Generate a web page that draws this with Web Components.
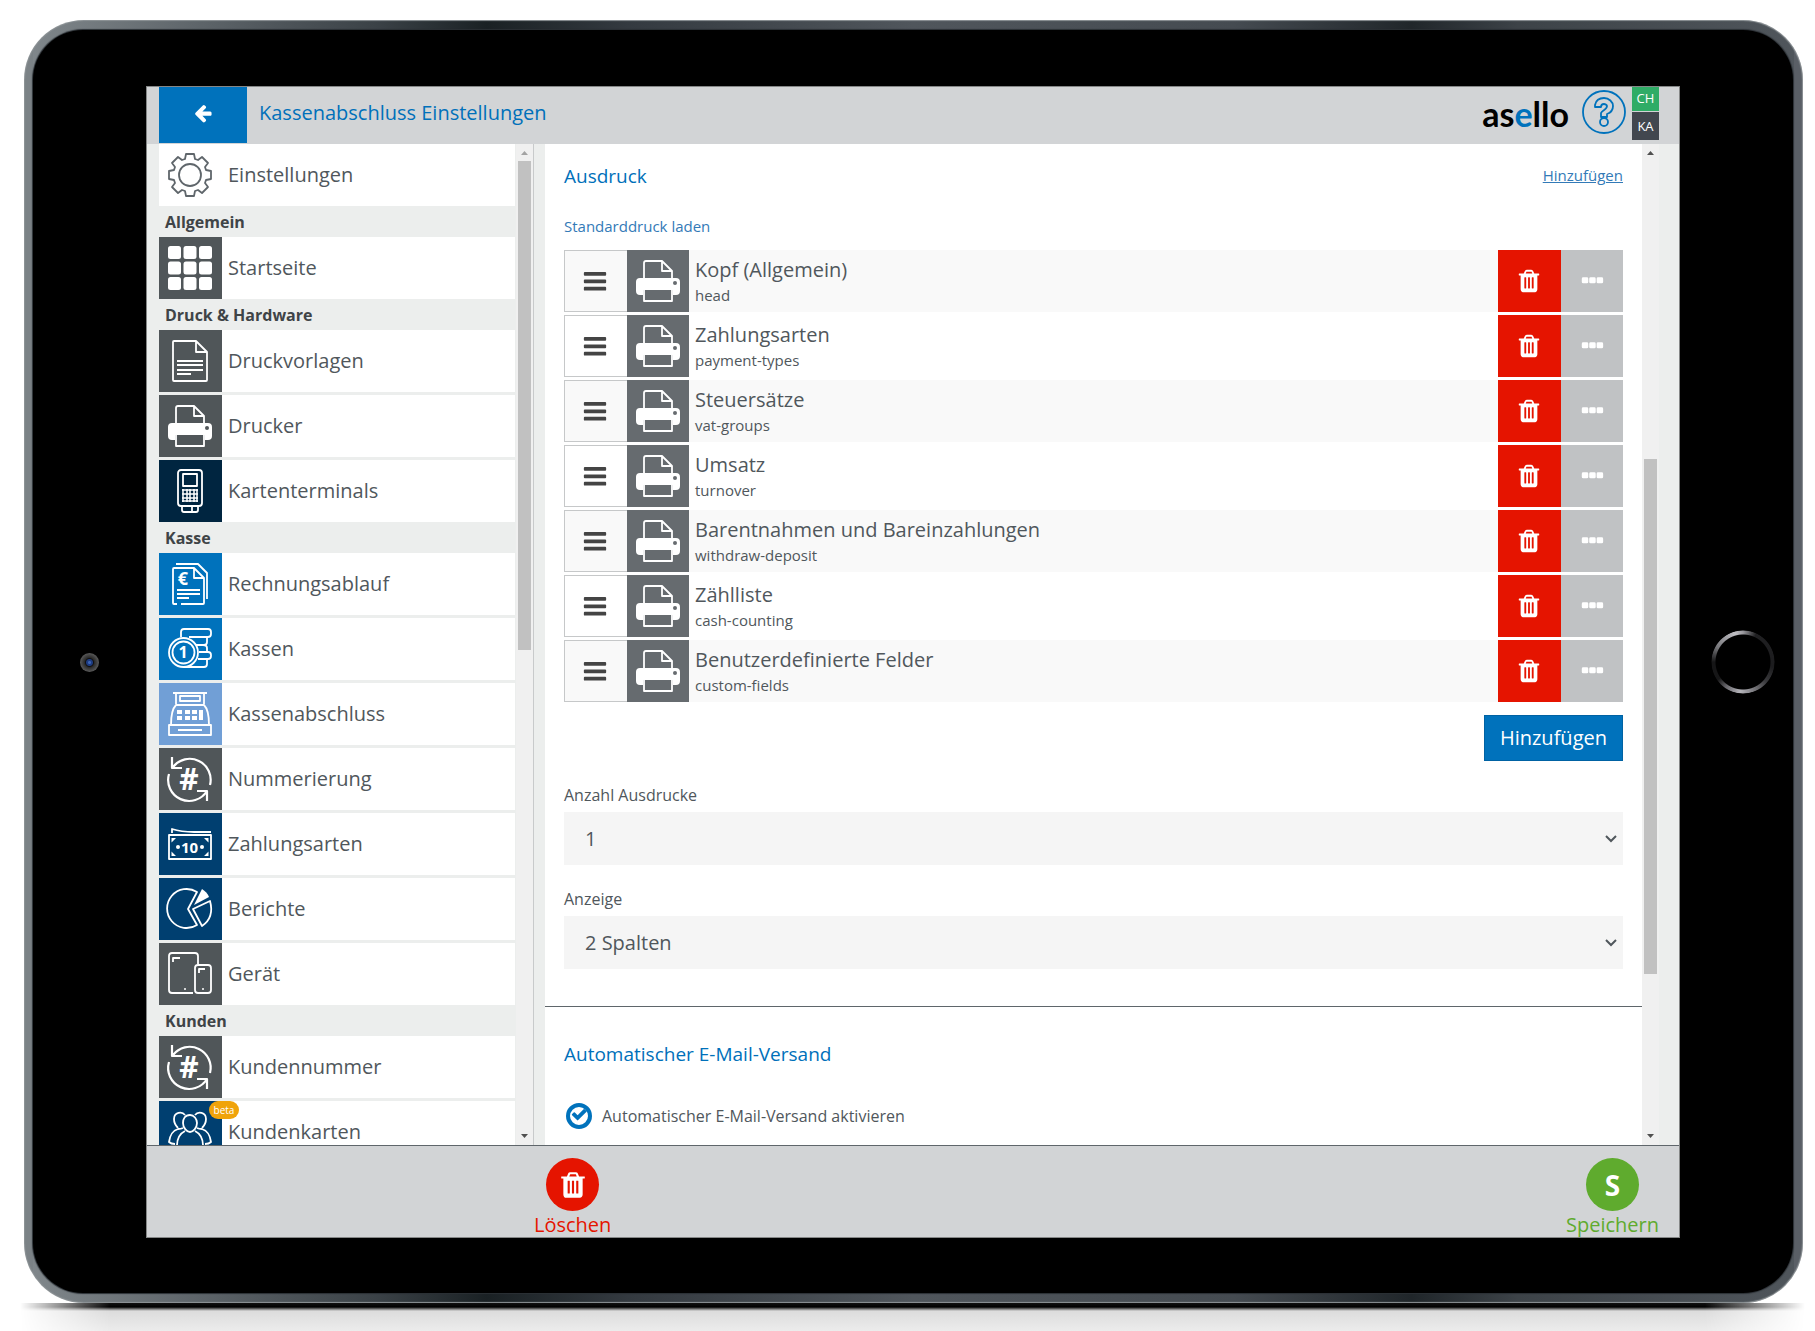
<!DOCTYPE html>
<html lang="de">
<head>
  <meta charset="utf-8">
  <title>Kassenabschluss Einstellungen</title>
  <style>
    body {
      background-color: hsl(0, 0%, 100%);
      color: #50575c;
      font-family: "Open Sans", "Liberation Sans", sans-serif;
      font-size: 20px;
      margin: 0;
    }
  </style>
</head>
<body>
  <tablet-frame>
    <settings-page></settings-page>
  </tablet-frame>

  <script>
    const printer = /* html */ `
      <path d="M8 19V4Q8 2 10 2H26L36 12V19M26 2V12H36" />
      <path class="solid" d="M4 19H40Q44 19 44 23V32Q44 36 40 36H37V31H7V36H4Q0 36 0 32V23Q0 19 4 19Z" />
      <circle class="hole" cx="39" cy="24" r="2" />
      <path d="M8 30H36V42H8Z" />`

    const renumber = /* html */ `
      <path class="bold" d="M5 10A21 21 0 0 1 42 28M1 17A21 21 0 0 0 39 34M4 0V11H14M29 34H39V44" />
      <text x="21" y="33" font-size="30">#</text>`

    const icons = {
      gear: /* html */ `
        <circle cx="22" cy="22" r="11" />
        <path d="M17 6L18 1H26L27 6L30 7L34 4L40 10L37 14L38 17L43 18V26L38 27L37 30L40 34L34 40L30 37L27 38L26 43H18L17 38L14 37L10 40L4 34L7 30L6 27L1 26V18L6 17L7 14L4 10L10 4L14 7Z" />`,
      grid: [0, 15.5, 31].map(y => [0, 15.5, 31].map(x =>
        `<rect class="solid" x="${x}" y="${y}" width="13" height="13" rx="2.5" />`).join('')).join(''),
      document: /* html */ `
        <path d="M28 2H6Q5 2 5 3V41Q5 42 6 42H38Q39 42 39 41V13ZM28 2V13H39" />
        <path d="M9 22H35M9 26H35M9 31H35M9 35H23" />`,
      printer,
      terminal: /* html */ `
        <rect x="10" y="1" width="24" height="36" rx="3" />
        <rect x="15" y="5" width="14" height="12" />
        <path d="M14 37V41Q14 43 16 43H28Q30 43 30 41V37M24 37V43" />
        <path class="thin" d="M14 21H30M14 25H30M14 29H30M14 32H30M15 20V33M19 20V33M22 20V33M26 20V33M29 20V33" />`,
      invoice: /* html */ `
        <path d="M9 42H6Q5 42 5 41V7Q5 6 6 6H26L36 16V41Q36 42 35 42H13M26 6V16H36M8 2H30L39 11V37" />
        <path d="M9 28H32M9 32H32M9 36H21" />
        <text x="15" y="23" font-size="18">€</text>`,
      coins: /* html */ `
        <circle cx="15.5" cy="25.5" r="14.5" /><circle cx="15.5" cy="25.5" r="11" />
        <path d="M13 10V5Q13 2 16 2H40Q43 2 43 5V7Q43 10 40 10H21M39 10V15Q39 18 36 18H28M35 18Q39 18 39 21V25H31M38 25H40Q43 25 43 28V29Q43 32 40 32H30M39 32V37Q39 40 36 40H16M30 32H36" />
        <text x="15" y="31" font-size="16">1</text>`,
      register: /* html */ `
        <path d="M5 1H39M8 1V12M36 1V12M12 4H32V9H12ZM1 33H43V43H1ZM10 38H34M3 33C3 24 4 17 8 13H36C40 17 41 24 41 33" />
        <path class="keys" d="M9 20H14M17 20H22M24 20H29M9 26H14M17 26H22M24 26H29M33 18V28" />`,
      renumber,
      banknote: /* html */ `
        <path d="M1 13H43V37H1ZM4 11V7C10 9 18 10 26 10H43" />
        <path class="solid" d="M3.5 16H8L3.5 20.5ZM40.5 16V20.5L36 16ZM3.5 34V29.5L8 34ZM40.5 34H36L40.5 29.5Z" />
        <circle class="solid" cx="10" cy="25" r="2" /><circle class="solid" cx="34" cy="25" r="2" />
        <text x="21.5" y="31" font-size="15">10</text>`,
      pie: /* html */ `
        <path d="M29 5A19.5 19.5 0 1 0 29 38L20 22ZM25 22L42 14C45 25 43 33 34 39Z" />
        <path class="solid" d="M26 18L34 2Q39 5 41 10Z" />`,
      devices: /* html */ `
        <path d="M30 12V4Q30 1 27 1H4Q1 1 1 4V38Q1 41 4 41H25" />
        <rect x="27" y="13" width="16" height="28" rx="3" />
        <path d="M5 10V6H12M31 21V17H37" />
        <circle class="solid" cx="17" cy="37" r="1" /><circle class="solid" cx="35" cy="37" r="1" />`,
      people: /* html */ `
        <path d="M22 5C17 5 15 9 15 13C15 18 19 22 22 22C25 22 29 18 29 13C29 9 26 5 22 5Z" />
        <path d="M17 5C14 1 6 2 6 9C6 13 8 16 10 18M27 5C30 1 38 2 38 9C38 13 36 16 34 18" />
        <path d="M10 19C4 21 2 25 1 32Q3 34 7 34M34 19C40 21 42 25 43 32Q41 34 37 34" />
        <path d="M17 21C11 24 9 29 9 36M27 21C33 24 35 29 35 36M15 18C13 19 11 19 10 19M29 18C31 19 33 19 34 19" />`,
      help: /* html */ `
        <circle cx="22" cy="22" r="21" />
        <path d="M13 15C14 10 17 8 22 8C27 8 31 12 31 16C31 21 28 23 25 24V27H19V23C20 20 25 20 25 16C25 15 23 14 22 14C20 14 19 15 19 17H13Z" />
        <circle cx="22" cy="32" r="4" />`
    }

    const glyphs = {
      trash: 'M704 1376v-704q0-14-9-23t-23-9h-64q-14 0-23 9t-9 23v704q0 14 9 23t23 9h64q14 0 23-9t9-23zm256 0v-704q0-14-9-23t-23-9h-64q-14 0-23 9t-9 23v704q0 14 9 23t23 9h64q14 0 23-9t9-23zm256 0v-704q0-14-9-23t-23-9h-64q-14 0-23 9t-9 23v704q0 14 9 23t23 9h64q14 0 23-9t9-23zm-544-992h448l-48-117q-7-9-17-11h-317q-10 2-17 11zm928 32v64q0 14-9 23t-23 9h-96v948q0 83-47 143.5t-113 60.5h-832q-66 0-113-58.5t-47-141.5v-952h-96q-14 0-23-9t-9-23v-64q0-14 9-23t23-9h309l70-167q15-37 54-63t79-26h320q40 0 79 26t54 63l70 167h309q14 0 23 9t9 23z',
      back: 'M1664 896v128q0 53-32.5 90.5t-84.5 37.5h-704l293 294q38 36 38 90t-38 90l-75 76q-37 37-90 37-52 0-91-37l-651-652q-37-37-37-90 0-52 37-91l651-650q38-38 91-38 52 0 90 38l75 74q38 38 38 91t-38 91l-293 293h704q52 0 84.5 37.5t32.5 90.5z',
      bars: 'M128 340q0-64 64-64h1408q64 0 64 64v128q0 64-64 64h-1408q-64 0-64-64zM128 852q0-64 64-64h1408q64 0 64 64v128q0 64-64 64h-1408q-64 0-64-64zM128 1364q0-64 64-64h1408q64 0 64 64v128q0 64-64 64h-1408q-64 0-64-64z',
      more: 'M192 736q0-96 96-96h256q96 0 96 96v224q0 96-96 96h-256q-96 0-96-96zM704 736q0-96 96-96h256q96 0 96 96v224q0 96-96 96h-256q-96 0-96-96zM1216 736q0-96 96-96h256q96 0 96 96v224q0 96-96 96h-256q-96 0-96-96z',
      check: 'M1400 620l-560 560q-40 40-80 0l-340-340q-40-40 0-80l110-110q40-40 80 0l190 190 410-410q40-40 80 0l110 110q40 40 0 80z'
    }

    class LineIcon extends HTMLElement {
      constructor () {
        super()
        this.shadow = this.attachShadow({ mode: 'open' })
      }

      connectedCallback () {
        this.shadow.innerHTML =
          /* html */ `
            <style>
              :host{
                display: block;
                height: 44px;
                width: 44px;
              }

              svg{
                display: block;
                fill: none;
                height: 100%;
                overflow: visible;
                stroke: currentColor;
                stroke-linejoin: round;
                stroke-width: 1.8;
                width: 100%;
              }

              .solid{
                fill: currentColor;
                stroke: none;
              }

              .hole{
                fill: var(--tile, #505659);
                stroke: none;
              }

              .thin{
                stroke-width: 1.5;
              }

              .bold{
                stroke-width: 2.2;
              }

              .keys{
                stroke-width: 4;
              }

              text{
                fill: currentColor;
                font-family: "Open Sans", sans-serif;
                font-weight: 700;
                stroke: none;
                text-anchor: middle;
              }
            </style>
            <svg viewBox="0 0 44 44" aria-hidden="true">${icons[this.getAttribute('name')]}</svg>
          `
      }
    }

    customElements.define('line-icon', LineIcon)

    class GlyphIcon extends HTMLElement {
      constructor () {
        super()
        this.shadow = this.attachShadow({ mode: 'open' })
      }

      connectedCallback () {
        this.shadow.innerHTML =
          /* html */ `
            <style>
              :host{
                display: block;
                height: 26px;
                width: 26px;
              }

              svg{
                display: block;
                fill: currentColor;
                height: 100%;
                width: 100%;
              }
            </style>
            <svg viewBox="0 0 1792 1792" aria-hidden="true"><path d="${glyphs[this.getAttribute('name')]}" /></svg>
          `
      }
    }

    customElements.define('glyph-icon', GlyphIcon)

    class TabletFrame extends HTMLElement {
      constructor () {
        super()
        this.shadow = this.attachShadow({ mode: 'open' })
        this.shadow.innerHTML =
          /* html */ `
            <style>
              :host{
                box-sizing: border-box;
                display: flex;
                flex-direction: column;
                height: 100vh;
                padding-top: 20px;
              }

              .case{
                background:
                  linear-gradient(90deg, #7b8286 0, #7b8286 9px, transparent 9px, transparent calc(100% - 9px), #5a5f66 calc(100% - 9px)),
                  linear-gradient(90deg, #81888c 0, #5d6469 10%, #3a4146 20%, #1a2124 26%, #343a40 34%, #50565c 50%, #454b51 68%, #20262a 78%, #3d4348 84%, #50565c 100%);
                border-radius: 60px;
                box-shadow: inset 0 0 1px 1px #8e9497;
                box-sizing: border-box;
                display: flex;
                flex: 1;
                margin: 0 12px 0 24px;
                min-height: 0;
                padding: 10px 10px 10px 9px;
              }

              .glass{
                background-color: #000;
                border-radius: 50px;
                box-shadow: 0 0 1px 1px #2b3035;
                display: grid;
                flex: 1;
                grid-template-columns: 113px 1fr 113px;
                grid-template-rows: minmax(0, 1fr);
                padding: 56px 0 55px;
              }

              .screen{
                border: 1px solid #858787;
                display: flex;
                min-width: 0;
                overflow: hidden;
              }

              .camera, .home{
                align-self: center;
                border-radius: 50%;
                justify-self: center;
              }

              .camera{
                background: radial-gradient(circle, #3c64b4 0 1px, #1c3a80 2px 3px, #111 4px, #2c2c2c 5px, #555 9px);
                height: 19px;
                width: 19px;
              }

              .home{
                background: conic-gradient(#9a999e 0deg, #202022 25deg, #1c1c1e 100deg, #39393c 130deg, #b5b4ba 185deg, #66656a 215deg, #161617 235deg, #161617 270deg, #77777b 300deg, #c0bfc4 345deg, #9a999e 360deg);
                height: 64px;
                margin-left: 13px;
                mask: radial-gradient(circle, transparent 27px, #000 28px 31px, transparent 32px);
                width: 64px;
              }

              .ground{
                background: linear-gradient(#111 0, #000 4px, #777 6px, #dcdcdc 8px, #ececec 100%);
                flex: none;
                height: 28px;
                mask: linear-gradient(90deg, transparent 20px, #000 110px, #000 calc(100% - 110px), transparent calc(100% - 10px));
              }
            </style>

            <div class="case">
              <div class="glass">
                <span class="camera"></span>
                <div class="screen"><slot></slot></div>
                <span class="home"></span>
              </div>
            </div>
            <div class="ground"></div>
          `
      }
    }

    customElements.define('tablet-frame', TabletFrame)

    class ScrollBar extends HTMLElement {
      constructor () {
        super()
        this.shadow = this.attachShadow({ mode: 'open' })
      }

      // before / size / after are shares of the free track
      connectedCallback () {
        const [before, size, after] = this.getAttribute('parts').split(' ')
        this.shadow.innerHTML =
          /* html */ `
            <style>
              :host{
                align-items: center;
                background-color: #f0f0f0;
                display: flex;
                flex: none;
                flex-direction: column;
                width: 17px;
              }

              svg{
                fill: #505050;
                flex: none;
                height: 17px;
                width: 17px;
              }

              :host([at-top]) .up{
                fill: #a3a3a3;
              }

              .thumb{
                background-color: #c1c1c1;
                width: 13px;
              }
            </style>
            <svg class="up" viewBox="0 0 17 17"><path d="M5 11L8.5 7L12 11Z" /></svg>
            <span style="flex: ${before}"></span>
            <span class="thumb" style="flex: ${size}"></span>
            <span style="flex: ${after}"></span>
            <svg viewBox="0 0 17 17"><path d="M5 6L8.5 10L12 6Z" /></svg>
          `
      }
    }

    customElements.define('scroll-bar', ScrollBar)

    class PageHeader extends HTMLElement {
      constructor () {
        super()
        this.shadow = this.attachShadow({ mode: 'open' })
        this.shadow.innerHTML =
          /* html */ `
            <style>
              :host{
                align-items: flex-start;
                background-color: #d2d4d6;
                display: flex;
                flex: none;
                height: 57px;
                padding: 0 20px 0 12px;
              }

              button{
                background: none;
                border: 0;
                color: #0072bc;
                padding: 0;
              }

              .back{
                background-color: #0072bc;
                color: #fff;
                display: grid;
                height: 56px;
                padding-bottom: 4px;
                place-content: center;
                width: 88px;
              }

              .back glyph-icon{
                height: 20px;
                width: 20px;
              }

              h1{
                color: #0070ba;
                flex: 1;
                font-size: 20px;
                font-weight: 400;
                line-height: 52px;
                margin: 0 0 0 12px;
              }

              .logo{
                color: #000;
                font-family: Lato, sans-serif;
                font-size: 34px;
                font-weight: 700;
                line-height: 54px;
                margin-right: 13px;
              }

              .logo span{
                color: #0072bc;
              }

              .help{
                margin: 3px 6px 0 0;
              }

              .badges{
                color: #fff;
                display: grid;
                font-size: 13px;
                gap: 1px;
                grid-template-rows: 24px 28px;
                text-align: center;
                width: 27px;
              }

              .branch{
                background-color: #2fac66;
                line-height: 22px;
              }

              .user{
                background-color: #42474f;
                line-height: 29px;
              }
            </style>

            <button class="back" aria-label="Zurück"><glyph-icon name="back"></glyph-icon></button>
            <h1><slot></slot></h1>
            <div class="logo">as<span>e</span>llo</div>
            <button class="help" aria-label="Hilfe"><line-icon name="help"></line-icon></button>
            <div class="badges">
              <span class="branch">CH</span>
              <span class="user">KA</span>
            </div>
          `
      }
    }

    customElements.define('page-header', PageHeader)

    class NavItem extends HTMLElement {
      constructor () {
        super()
        this.shadow = this.attachShadow({ mode: 'open' })
      }

      connectedCallback () {
        const badge = this.getAttribute('badge')
        this.shadow.innerHTML =
          /* html */ `
            <style>
              :host{
                background-color: #fff;
                display: block;
                position: relative;
              }

              a{
                align-items: center;
                color: inherit;
                display: flex;
                height: 62px;
                text-decoration: none;
              }

              .tile{
                --tile: ${this.getAttribute('tile') || '#fff'};
                background-color: var(--tile);
                box-sizing: border-box;
                color: ${this.hasAttribute('tile') ? '#fff' : '#5f666b'};
                height: 62px;
                padding: 9px;
                width: 63px;
              }

              .label{
                padding: 0 0 2px 6px;
              }

              .badge{
                background-color: #f0a30a;
                border-radius: 9px;
                color: #fff;
                font-size: 10px;
                left: 50px;
                line-height: 18px;
                position: absolute;
                text-align: center;
                top: 0;
                width: 30px;
              }
            </style>

            <a href="#">
              <span class="tile"><line-icon name="${this.getAttribute('icon')}"></line-icon></span>
              <span class="label"><slot></slot></span>
            </a>
            ${badge ? `<span class="badge">${badge}</span>` : ''}
          `
      }
    }

    customElements.define('nav-item', NavItem)

    class SideNav extends HTMLElement {
      constructor () {
        super()
        this.shadow = this.attachShadow({ mode: 'open' })
        this.data = []
      }

      connectedCallback () {
        this.loadData()
        this.render()
      }

      loadData () {
        const grey = '#505659'
        const blue = '#0072bc'
        const navy = '#003f70'

        this.data = [
          {
            title: 'Allgemein',
            items: [
              { label: 'Startseite', icon: 'grid', tile: grey }
            ]
          },
          {
            title: 'Druck &amp; Hardware',
            items: [
              { label: 'Druckvorlagen', icon: 'document', tile: grey },
              { label: 'Drucker', icon: 'printer', tile: grey },
              { label: 'Kartenterminals', icon: 'terminal', tile: '#002540' }
            ]
          },
          {
            title: 'Kasse',
            items: [
              { label: 'Rechnungsablauf', icon: 'invoice', tile: blue },
              { label: 'Kassen', icon: 'coins', tile: blue },
              { label: 'Kassenabschluss', icon: 'register', tile: '#719fd6' },
              { label: 'Nummerierung', icon: 'renumber', tile: grey },
              { label: 'Zahlungsarten', icon: 'banknote', tile: navy },
              { label: 'Berichte', icon: 'pie', tile: navy },
              { label: 'Gerät', icon: 'devices', tile: grey }
            ]
          },
          {
            title: 'Kunden',
            items: [
              { label: 'Kundennummer', icon: 'renumber', tile: grey },
              { label: 'Kundenkarten', icon: 'people', tile: navy, badge: 'beta' }
            ]
          }
        ]
      }

      render () {
        this.shadow.innerHTML =
          /* html */ `
            <style>
              :host{
                border-right: 1px solid #c8cacb;
                box-sizing: border-box;
                display: flex;
                min-height: 0;
              }

              nav{
                flex: 1;
                margin-right: 1px;
                overflow: hidden;
              }

              h2{
                color: #3f4447;
                font-size: 16px;
                font-weight: 700;
                line-height: 29px;
                margin: 0;
                padding: 2px 0 0 6px;
              }

              .group{
                display: flex;
                flex-direction: column;
                gap: 3px;
              }
            </style>

            <nav>
              <nav-item icon="gear">Einstellungen</nav-item>
              ${this.data.map(group => `
                <h2>${group.title}</h2>
                <div class="group">
                  ${group.items.map(item => `
                    <nav-item icon="${item.icon}" tile="${item.tile}" ${item.badge ? `badge="${item.badge}"` : ''}>${item.label}</nav-item>
                  `).join('')}
                </div>
              `).join('')}
            </nav>
            <scroll-bar at-top parts="0 506 494"></scroll-bar>
          `
      }
    }

    customElements.define('side-nav', SideNav)

    class PrintRow extends HTMLElement {
      constructor () {
        super()
        this.shadow = this.attachShadow({ mode: 'open' })
      }

      connectedCallback () {
        this.shadow.innerHTML =
          /* html */ `
            <style>
              :host{
                display: grid;
                grid-template-columns: 63px 62px 1fr 63px 62px;
                height: 62px;
              }

              button{
                border: 0;
                color: #fff;
                display: grid;
                padding: 0 1px 0 0;
                place-content: center;
              }

              .handle{
                background: none;
                border: 1px solid #c6c8c9;
                border-right: 0;
                color: #444;
                padding-right: 2px;
              }

              .tile{
                --tile: #666b6f;
                background-color: var(--tile);
                color: #fff;
                display: grid;
                place-content: center;
              }

              .text{
                min-width: 0;
                padding: 6px 0 0 6px;
              }

              .name{
                line-height: 28px;
              }

              .key{
                font-size: 15px;
                line-height: 22px;
              }

              .delete{
                background-color: #e51400;
              }

              .more{
                background-color: #c0c2c4;
              }
            </style>

            <button class="handle" aria-label="Verschieben"><glyph-icon name="bars"></glyph-icon></button>
            <span class="tile"><line-icon name="printer"></line-icon></span>
            <div class="text">
              <div class="name"><slot></slot></div>
              <div class="key">${this.getAttribute('key')}</div>
            </div>
            <button class="delete" aria-label="Löschen"><glyph-icon name="trash"></glyph-icon></button>
            <button class="more" aria-label="Mehr"><glyph-icon name="more"></glyph-icon></button>
          `
      }
    }

    customElements.define('print-row', PrintRow)

    class SelectField extends HTMLElement {
      constructor () {
        super()
        this.shadow = this.attachShadow({ mode: 'open' })
      }

      connectedCallback () {
        this.shadow.innerHTML =
          /* html */ `
            <style>
              :host{
                display: block;
                margin-top: 23px;
              }

              label{
                display: block;
                font-size: 16px;
                line-height: 22px;
                margin-bottom: 6px;
              }

              .box{
                align-items: center;
                display: grid;
              }

              select, svg{
                grid-area: 1 / 1;
              }

              select{
                appearance: none;
                background-color: #f5f5f5;
                border: 0;
                border-radius: 0;
                color: inherit;
                font: inherit;
                height: 53px;
                padding: 0 21px;
                width: 100%;
              }

              svg{
                fill: none;
                height: 12px;
                justify-self: end;
                margin-right: 6px;
                pointer-events: none;
                stroke: #50575c;
                stroke-width: 2;
                width: 12px;
              }
            </style>

            <label for="field">${this.getAttribute('label')}</label>
            <div class="box">
              <select id="field"><option>${this.getAttribute('value')}</option></select>
              <svg viewBox="0 0 12 12"><path d="M1 3L6 8L11 3" /></svg>
            </div>
          `
      }
    }

    customElements.define('select-field', SelectField)

    class CheckField extends HTMLElement {
      constructor () {
        super()
        this.shadow = this.attachShadow({ mode: 'open' })
        this.shadow.innerHTML =
          /* html */ `
            <style>
              :host{
                display: grid;
                font-size: 16px;
                gap: 10px;
                grid-template-columns: 26px 1fr;
                line-height: 26px;
                padding-left: 2px;
              }

              input, glyph-icon{
                grid-area: 1 / 1;
              }

              input{
                appearance: none;
                border: 4px solid #0072bc;
                border-radius: 50%;
                height: 26px;
                margin: 0;
                width: 26px;
              }

              glyph-icon{
                color: #0072bc;
                pointer-events: none;
              }

              input:not(:checked) + glyph-icon{
                visibility: hidden;
              }
            </style>

            <input type="checkbox" id="check" checked>
            <glyph-icon name="check"></glyph-icon>
            <label for="check"><slot></slot></label>
          `
      }
    }

    customElements.define('check-field', CheckField)

    class ClosingForm extends HTMLElement {
      constructor () {
        super()
        this.shadow = this.attachShadow({ mode: 'open' })
        this.data = []
      }

      connectedCallback () {
        this.loadData()
        this.render()
      }

      loadData () {
        this.data = [
          { name: 'Kopf (Allgemein)', key: 'head' },
          { name: 'Zahlungsarten', key: 'payment-types' },
          { name: 'Steuersätze', key: 'vat-groups' },
          { name: 'Umsatz', key: 'turnover' },
          { name: 'Barentnahmen und Bareinzahlungen', key: 'withdraw-deposit' },
          { name: 'Zählliste', key: 'cash-counting' },
          { name: 'Benutzerdefinierte Felder', key: 'custom-fields' }
        ]
      }

      render () {
        this.shadow.innerHTML =
          /* html */ `
            <style>
              :host{
                background-color: #fff;
                display: block;
                min-width: 0;
                overflow: hidden;
              }

              section{
                padding: 19px 19px 37px;
              }

              section + section{
                border-top: 1px solid #5f666b;
                padding-top: 34px;
              }

              header{
                display: flex;
                justify-content: space-between;
                margin-bottom: 26px;
              }

              h2{
                color: #0070ba;
                font-size: 19px;
                font-weight: 400;
                line-height: 26px;
                margin: 0;
              }

              a{
                color: #337ab7;
                font-size: 15px;
                line-height: 24px;
              }

              .default{
                display: block;
                line-height: 22px;
                margin-bottom: 13px;
                text-decoration: none;
              }

              .rows{
                display: flex;
                flex-direction: column;
                gap: 3px;
              }

              print-row:nth-child(odd){
                background-color: #f9f9f9;
              }

              .add{
                background-color: #0072bc;
                border: 1px solid #0062a3;
                color: #fff;
                display: block;
                font: inherit;
                height: 46px;
                margin: 13px 0 0 auto;
                padding: 0 15px 2px;
              }

              check-field{
                margin-top: 36px;
              }
            </style>

            <section>
              <header>
                <h2>Ausdruck</h2>
                <a href="#">Hinzufügen</a>
              </header>
              <a class="default" href="#">Standarddruck laden</a>
              <div class="rows">
                ${this.data.map(row => `<print-row key="${row.key}">${row.name}</print-row>`).join('')}
              </div>
              <button class="add">Hinzufügen</button>
              <select-field label="Anzahl Ausdrucke" value="1"></select-field>
              <select-field label="Anzeige" value="2 Spalten"></select-field>
            </section>

            <section>
              <h2>Automatischer E-Mail-Versand</h2>
              <check-field>Automatischer E-Mail-Versand aktivieren</check-field>
            </section>
          `
      }
    }

    customElements.define('closing-form', ClosingForm)

    class RoundAction extends HTMLElement {
      constructor () {
        super()
        this.shadow = this.attachShadow({ mode: 'open' })
        this.shadow.innerHTML =
          /* html */ `
            <style>
              :host{
                display: block;
              }

              button{
                align-items: center;
                background: none;
                border: 0;
                color: var(--action);
                display: flex;
                flex-direction: column;
                font: inherit;
                line-height: 28px;
                padding: 0;
              }

              .circle{
                background-color: var(--action);
                border-radius: 50%;
                color: #fff;
                display: grid;
                font-size: 28px;
                font-weight: 700;
                height: 53px;
                place-content: center;
                width: 53px;
              }
            </style>

            <button>
              <span class="circle"><slot name="icon"></slot></span>
              <slot></slot>
            </button>
          `
      }
    }

    customElements.define('round-action', RoundAction)

    class SettingsPage extends HTMLElement {
      constructor () {
        super()
        this.shadow = this.attachShadow({ mode: 'open' })
        this.shadow.innerHTML =
          /* html */ `
            <style>
              :host{
                background-color: #eceeed;
                display: flex;
                flex: 1;
                flex-direction: column;
                min-width: 0;
              }

              main{
                display: grid;
                flex: 1;
                grid-template-columns: 375px 11px 1fr 17px;
                grid-template-rows: minmax(0, 1fr);
                min-height: 0;
                padding: 0 20px 0 12px;
              }

              closing-form{
                grid-column: 3;
              }

              footer{
                background-color: #d2d4d6;
                border-top: 1px solid #5f666b;
                box-sizing: border-box;
                display: flex;
                flex: none;
                height: 92px;
                justify-content: space-between;
                padding: 12px 20px 0 387px;
              }

              round-action{
                line-height: 26px;
              }

              .delete{
                --action: #e51400;
              }

              .delete glyph-icon{
                height: 30px;
                width: 30px;
              }

              .save{
                --action: #5fab2e;
              }
            </style>

            <page-header>Kassenabschluss Einstellungen</page-header>
            <main>
              <side-nav></side-nav>
              <closing-form></closing-form>
              <scroll-bar parts="308 533 159"></scroll-bar>
            </main>
            <footer>
              <round-action class="delete"><glyph-icon slot="icon" name="trash"></glyph-icon>Löschen</round-action>
              <round-action class="save"><span slot="icon">S</span>Speichern</round-action>
            </footer>
          `
      }
    }

    customElements.define('settings-page', SettingsPage)
  </script>
</body>
</html>
